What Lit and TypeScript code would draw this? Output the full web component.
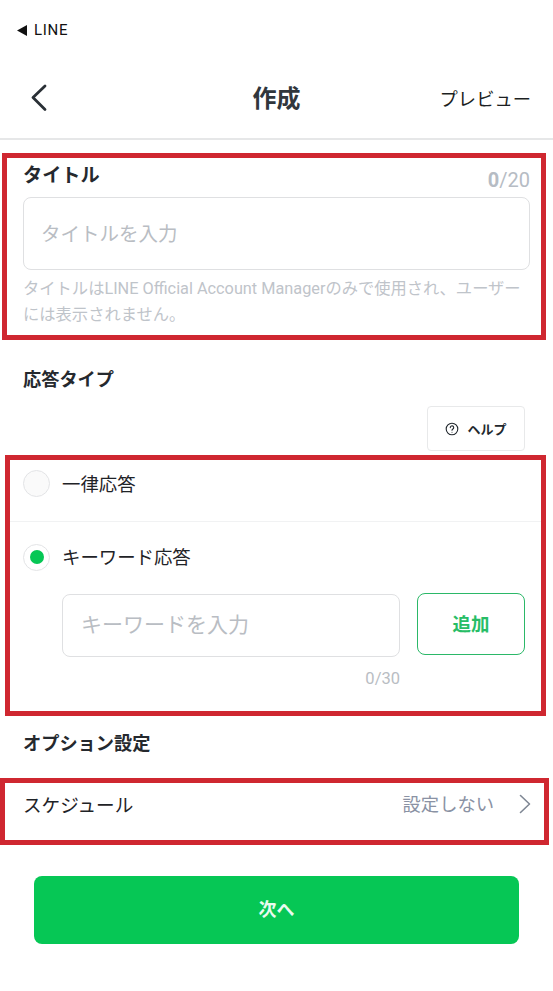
import { LitElement, html, css } from "lit";
import { customElement } from "lit/decorators.js";

@customElement("app-root")
export class AppRoot extends LitElement {
  static styles = css`
    :host {
      display: block;
      width: 553px;
      height: 991px;
      overflow: hidden;
      background: #fff;
      color: #22282e;
      font-family: Roboto, "Noto Sans CJK JP", sans-serif;
      box-sizing: border-box;
    }
    * { box-sizing: border-box; }
    .status {
      height: 60px;
      padding-left: 17px;
      display: flex;
      align-items: center;
      gap: 7px;
      font-size: 15px;
      font-weight: 400;
      letter-spacing: 0.7px;
      color: #111;
    }
    .status svg { width: 10px; height: 11px; display: block; }
    .header {
      height: 80px;
      border-bottom: 2px solid #e6e7e8;
      position: relative;
      display: flex;
      align-items: center;
      justify-content: space-between;
      padding: 0 22px 2px 30px;
    }
    .back { width: 18px; height: 28px; display: block; }
    .title {
      position: absolute;
      left: 0;
      right: 0;
      top: 21px;
      text-align: center;
      font-size: 24px;
      line-height: 36px;
      font-weight: 700;
      color: #30363c;
    }
    .preview { font-size: 18.3px; color: #1c1f22; }
    .box { border: 5px solid #cf2730; }
    .box1 {
      margin: 13px 7px 0 2px;
      height: 187px;
      padding: 5px 11px 0 16px;
    }
    .title-row { display: flex; justify-content: space-between; height: 34px; }
    .label { font-size: 19.2px; line-height: 26px; font-weight: 700; color: #25292e; }
    .count { margin-top: 5px; font-size: 20px; line-height: 24px; color: #b6bcc4; }
    .count b { font-weight: 700; }
    input {
      display: block;
      width: 100%;
      border: 1.5px solid #dfe0e2;
      border-radius: 8px;
      background: #fff;
      font: inherit;
      outline: none;
    }
    input::placeholder { color: #b9bdc3; opacity: 1; }
    .title-input { height: 73px; padding: 2px 0 0 17px; font-size: 19.5px; }
    .hint {
      margin: 6px 0 0;
      font-size: 16.3px;
      line-height: 26px;
      color: #bfc4ca;
      word-break: break-all;
    }
    .sec {
      margin: 28px 0 0 23px;
      font-size: 18.2px;
      line-height: 24px;
      font-weight: 700;
      color: #25292e;
    }
    .help-row { display: flex; justify-content: flex-end; padding-right: 28px; margin-top: 14px; }
    .help {
      width: 98px;
      height: 45px;
      border: 1.5px solid #e8e9ea;
      border-radius: 4px;
      display: flex;
      align-items: center;
      justify-content: center;
      gap: 8px;
      font-size: 13px;
      font-weight: 700;
      color: #22282e;
    }
    .help svg { width: 14px; height: 14px; display: block; }
    .box2 { margin: 4px 7px 0 5px; height: 261px; }
    .row {
      display: flex;
      align-items: center;
      gap: 12px;
      padding-left: 13px;
      font-size: 18.4px;
      line-height: 28px;
      color: #1f2327;
    }
    .row .txt { padding-top: 2px; }
    .row1 { height: 62px; padding-bottom: 14px; border-bottom: 1px solid #f1f2f3; }
    .row2 { height: 72px; padding-bottom: 2px; }
    .radio {
      width: 27px;
      height: 27px;
      flex: none;
      border-radius: 50%;
      border: 1.5px solid #e3e4e6;
      background: #fafafa;
      display: flex;
      align-items: center;
      justify-content: center;
    }
    .radio.on { background: #fff; }
    .radio.on::after {
      content: "";
      width: 14px;
      height: 14px;
      border-radius: 50%;
      background: #06c755;
    }
    .kw { display: flex; gap: 17px; padding: 0 16px 0 52px; }
    .kw-main { width: 338px; flex: none; }
    .kw-input { height: 63px; padding: 0 0 2px 18px; font-size: 21px; }
    .kw-count {
      margin-top: 12px;
      text-align: right;
      font-size: 16.5px;
      line-height: 20px;
      color: #b9bdc3;
    }
    .add {
      width: 108px;
      height: 62px;
      margin-top: -1px;
      border: 1.8px solid #2bb868;
      border-radius: 8px;
      display: flex;
      align-items: center;
      justify-content: center;
      padding-bottom: 3px;
      font-size: 18.5px;
      font-weight: 700;
      color: #27bd66;
    }
    .sec2 { margin-top: 16px; }
    .box3 {
      margin: 22px 4px 0 0;
      height: 67px;
      display: flex;
      align-items: center;
      padding: 0 12px 17px 18px;
      font-size: 18.3px;
      color: #1f2327;
    }
    .sched { flex: 1; font-size: 18.6px; }
    .value { color: #8a92a4; }
    .chev { width: 14px; height: 20px; margin-left: 24px; margin-top: 2px; display: block; }
    .next {
      margin: 31px 34px 0;
      height: 68px;
      border-radius: 8px;
      background: #06c755;
      display: flex;
      align-items: center;
      justify-content: center;
      padding-bottom: 4px;
      color: #e9fbf0;
      font-size: 18px;
      font-weight: 700;
    }
  `;

  render() {
    return html`
      <div class="status">
        <svg viewBox="0 0 10 11"><path d="M0 5.500 10 0v11z" fill="#111"/></svg>
        <span>LINE</span>
      </div>
      <div class="header">
        <svg class="back" viewBox="0 0 18 28" fill="none" stroke="#2a3036" stroke-width="2.8" stroke-linecap="round" stroke-linejoin="round"><path d="M15 2 3 13.500 15 25.500"/></svg>
        <div class="title">作成</div>
        <div class="preview">プレビュー</div>
      </div>

      <section class="box box1">
        <div class="title-row">
          <div class="label">タイトル</div>
          <div class="count"><b>0</b>/20</div>
        </div>
        <input class="title-input" placeholder="タイトルを入力" />
        <p class="hint">タイトルはLINE Official Account Managerのみで使用され、ユーザーには表示されません。</p>
      </section>

      <div class="sec">応答タイプ</div>
      <div class="help-row">
        <div class="help">
          <svg viewBox="0 0 14 14" fill="none" stroke="#22282e" stroke-width="1.100"><circle cx="7" cy="7" r="5.800"/><path d="M5.300 5.600a1.700 1.700 0 1 1 2.600 1.400c-.6.400-.9.700-.9 1.300" stroke-linecap="round"/><circle cx="7" cy="10.200" r=".5" fill="#22282e" stroke="none"/></svg>
          <span>ヘルプ</span>
        </div>
      </div>

      <section class="box box2">
        <div class="row row1"><span class="radio"></span><span class="txt">一律応答</span></div>
        <div class="row row2"><span class="radio on"></span><span class="txt">キーワード応答</span></div>
        <div class="kw">
          <div class="kw-main">
            <input class="kw-input" placeholder="キーワードを入力" />
            <div class="kw-count">0/30</div>
          </div>
          <div class="add">追加</div>
        </div>
      </section>

      <div class="sec sec2">オプション設定</div>
      <section class="box box3">
        <span class="sched">スケジュール</span>
        <span class="value">設定しない</span>
        <svg class="chev" viewBox="0 0 14 20" fill="none" stroke="#7f8794" stroke-width="1.600" stroke-linecap="round" stroke-linejoin="round"><path d="M2.500 1.500 11.500 10 2.500 18.500"/></svg>
      </section>

      <div class="next">次へ</div>
    `;
  }
}
